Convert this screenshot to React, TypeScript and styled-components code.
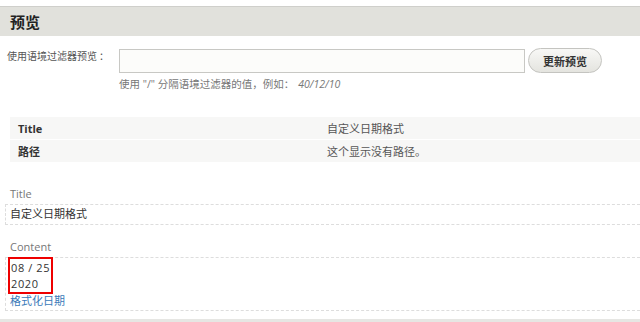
import React from 'react'
import styled, { createGlobalStyle } from 'styled-components'

const GlobalStyle = createGlobalStyle`
  body {
    margin: 0;
    background: #fff;
    font-family: "Open Sans", "Noto Sans CJK SC", sans-serif;
    color: #333;
  }
`

const Page = styled.div`
  width: 640px;
  height: 322px;
  overflow: hidden;
  padding-top: 6px;
  box-sizing: border-box;
`

const Header = styled.div`
  height: 29px;
  display: flex;
  align-items: center;
  padding-left: 10px;
  border-top: 1px solid #cfcfcb;
  background: #e1e1dc;
  font-size: 15px;
  font-weight: bold;
  color: #222;
`

const FormRow = styled.div`
  display: flex;
  align-items: center;
  margin-top: 12px;
`

const Label = styled.label`
  flex-shrink: 0;
  width: 119px;
  padding: 1px 0 0 7px;
  box-sizing: border-box;
  align-self: flex-start;
  white-space: nowrap;
  font-size: 10px;
  line-height: 14px;
  color: #555;
`

const Colon = styled.span`
  margin-left: 2px;
`

const Input = styled.input`
  flex-shrink: 0;
  width: 406px;
  height: 24px;
  box-sizing: border-box;
  border: 1px solid #c8c8c4;
  background: #fcfcfa;
`

const Button = styled.button`
  flex-shrink: 0;
  margin-left: 3px;
  width: 74px;
  height: 25px;
  border: 1px solid #c4c4c0;
  border-radius: 13px;
  background: linear-gradient(#f8f8f6, #e4e4df);
  font-family: inherit;
  font-size: 11px;
  font-weight: bold;
  color: #333;
`

const Help = styled.div`
  margin: 4px 0 0 119px;
  font-size: 10.5px;
  line-height: 14px;
  color: #777;
`

const Example = styled.em`
  margin-left: 4px;
`

const Table = styled.div`
  margin: 26px 0 0 10px;
  display: flex;
  flex-direction: column;
  gap: 1px;
`

const Row = styled.div`
  display: grid;
  grid-template-columns: 309px 1fr;
  height: 22px;
  align-items: center;
  background: #f7f7f6;
  font-size: 11px;
`

const Cell = styled.div<{ $head?: boolean }>`
  padding-left: 8px;
  font-weight: ${p => (p.$head ? 'bold' : 'normal')};
  color: ${p => (p.$head ? '#333' : '#555')};
`

const Field = styled.div<{ $top: number }>`
  margin-top: ${p => p.$top}px;
`

const FieldLabel = styled.div`
  padding-left: 10px;
  font-size: 11px;
  line-height: 14px;
  color: #777;
`

const FieldBody = styled.div<{ $pad: number }>`
  margin: 3px 0 0 5px;
  border: 1px dashed #ddd;
  border-right: none;
  padding: ${p => p.$pad}px 0 2px 4px;
  font-size: 11px;
  line-height: 16px;
  color: #333;
`

const DateBox = styled.div`
  margin: -1px 0 0 -2px;
  width: 45px;
  height: 37px;
  box-sizing: border-box;
  border: 2px solid #e00;
  padding: 1px 0 0 1px;
  white-space: nowrap;
  font-size: 11px;
  line-height: 16px;
  letter-spacing: 0.6px;
  color: #333;
`

const Link = styled.a`
  display: block;
  color: #3a7ab8;
  text-decoration: none;
  line-height: 14px;
`

const Footer = styled.div`
  margin-top: 8px;
  height: 6px;
  background: #e6e6e3;
`

export default function App() {
  return (
    <Page>
      <GlobalStyle />
      <Header>预览</Header>
      <FormRow>
        <Label>
          使用语境过滤器预览<Colon>：</Colon>
        </Label>
        <Input />
        <Button>更新预览</Button>
      </FormRow>
      <Help>
        使用 "/" 分隔语境过滤器的值，例如：<Example>40/12/10</Example>
      </Help>
      <Table>
        <Row>
          <Cell $head>Title</Cell>
          <Cell>自定义日期格式</Cell>
        </Row>
        <Row>
          <Cell $head>路径</Cell>
          <Cell>这个显示没有路径。</Cell>
        </Row>
      </Table>
      <Field $top={25}>
        <FieldLabel>Title</FieldLabel>
        <FieldBody $pad={1}>自定义日期格式</FieldBody>
      </Field>
      <Field $top={15}>
        <FieldLabel>Content</FieldLabel>
        <FieldBody $pad={0}>
          <DateBox>
            08 / 25
            <br />
            2020
          </DateBox>
          <Link href="#">格式化日期</Link>
        </FieldBody>
      </Field>
      <Footer />
    </Page>
  )
}
